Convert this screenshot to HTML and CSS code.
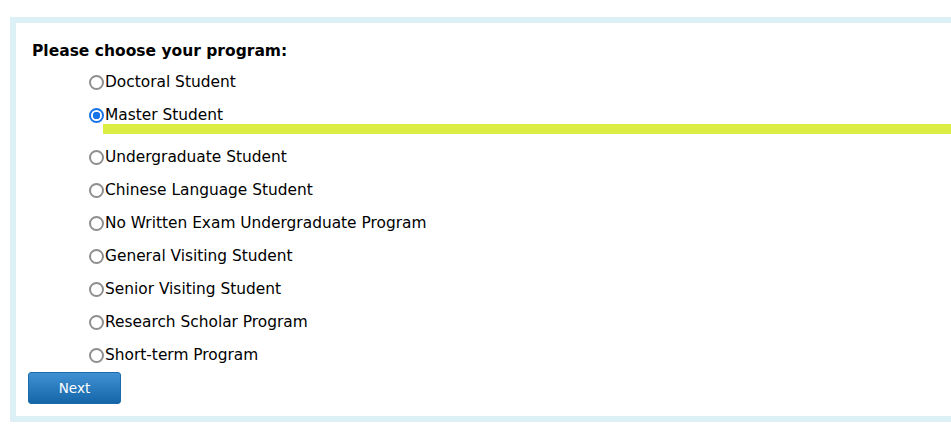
FILE: index.html
```html
<!DOCTYPE html>
<html>
    <head>
        <meta charset="utf-8" />
        <link rel="stylesheet" href="styles.css">
    </head>

    <body>
        <form class="panel">
            <div class="title">Please choose your program:</div>
            <div class="options">
                <label class="option"><input type="radio" name="program" />Doctoral Student</label>
                <label class="option"><input type="radio" name="program" checked />Master Student</label>
                <div class="marker"></div>
                <label class="option"><input type="radio" name="program" />Undergraduate Student</label>
                <label class="option"><input type="radio" name="program" />Chinese Language Student</label>
                <label class="option"><input type="radio" name="program" />No Written Exam Undergraduate Program</label>
                <label class="option"><input type="radio" name="program" />General Visiting Student</label>
                <label class="option"><input type="radio" name="program" />Senior Visiting Student</label>
                <label class="option"><input type="radio" name="program" />Research Scholar Program</label>
                <label class="option"><input type="radio" name="program" />Short-term Program</label>
            </div>
            <button type="button" class="next">Next</button>
        </form>
    </body>
</html>
```

FILE: styles.css
```css
body {
    margin: 0;
    overflow: hidden;
    font-family: "DejaVu Sans", Verdana, sans-serif;
    color: #000;
    background: #fff;
}

.panel {
    margin: 17px 0 0 10px;
    border: 6px solid #dcf0f5;
    border-right: none;
    padding: 18px 0 12px 12px;
    height: 363px;
    box-sizing: content-box;
}

.title {
    padding-left: 4px;
    font-weight: bold;
    font-size: 15.5px;
    line-height: 20px;
}

.options {
    display: flex;
    flex-direction: column;
    gap: 13px;
    margin: 11px 0 0 56px;
}

.option {
    display: flex;
    align-items: center;
    height: 20px;
    font-size: 15.4px;
    line-height: 20px;
}

.option input {
    appearance: none;
    -webkit-appearance: none;
    box-sizing: border-box;
    width: 15px;
    height: 15px;
    margin: 1px 1px 0 5px;
    border: 2px solid #8f8f8f;
    border-radius: 50%;
    background: #fff;
}

.option input:checked {
    border-color: #1a73e8;
    background: radial-gradient(circle, #1a73e8 0 3.5px, #fff 4px);
}

.marker {
    height: 10px;
    margin: -14px 0 0 19px;
    background: #dcee44;
}

.next {
    display: block;
    width: 93px;
    height: 32px;
    margin: 7px 0 0 0;
    padding: 0;
    border: 1px solid #1c6aa8;
    border-radius: 3px;
    background: linear-gradient(#3f91d4, #1566a9);
    color: #fff;
    font-family: "DejaVu Sans", Verdana, sans-serif;
    font-size: 13.5px;
}
```
